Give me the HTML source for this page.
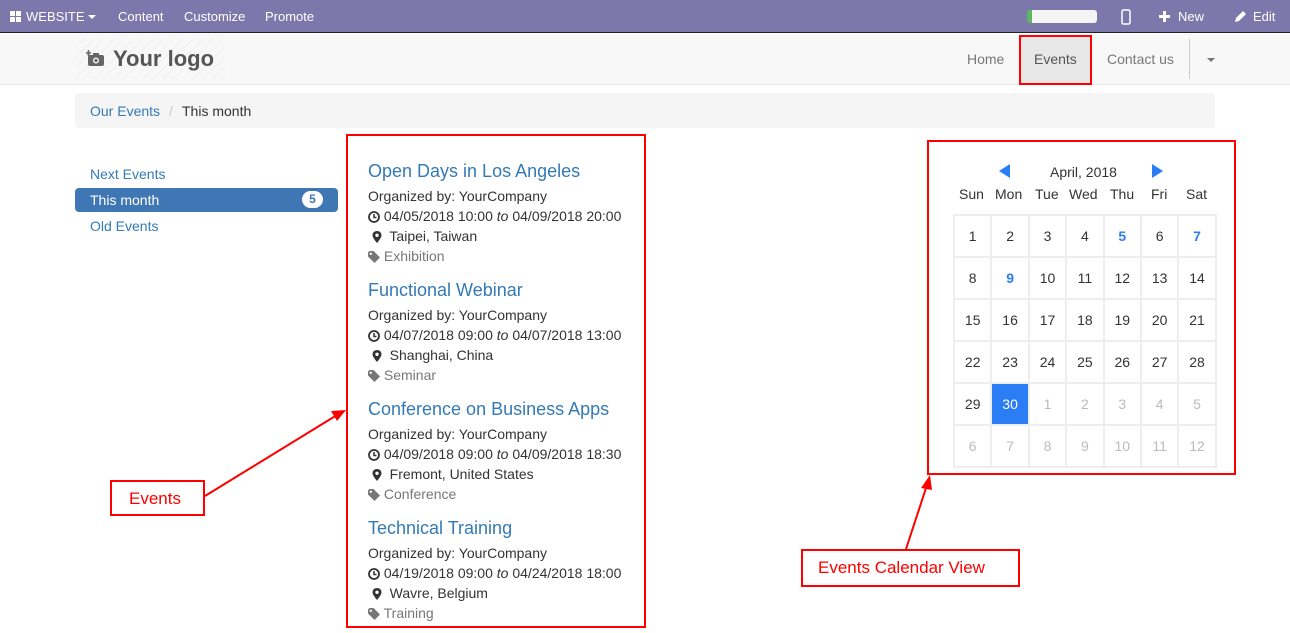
<!DOCTYPE html>
<html><head><meta charset="utf-8"><style>
*{margin:0;padding:0;box-sizing:border-box}
body{width:1290px;height:633px;overflow:hidden;background:#fff;font-family:"Liberation Sans",sans-serif;font-size:14px;color:#333;position:relative}
.a{position:absolute;white-space:nowrap}
.top{position:absolute;left:0;top:0;width:1290px;height:33px;background:#7c78ab;border-bottom:1px solid #222}
.top .a{color:#fff;font-size:13px;top:9px}
.hdr{position:absolute;left:0;top:34px;width:1290px;height:51px;background:#f8f8f8;border-bottom:1px solid #e7e7e7}
.blue{color:#337ab7}
.rb{position:absolute;border:2px solid #f00}
.cal{position:absolute;left:953px;top:214px;border-collapse:collapse;table-layout:fixed;width:262px}
.cal td{width:37.4px;height:42px;border:2px solid #eee;text-align:center;font-size:14px;color:#333;padding:0}
.cal td.m{color:#bbb}
.cal td.b{color:#2a7df4;font-weight:bold}
.cal td.s{background:#2a7df4;color:#fff}
.tag{color:#777}
.e{position:absolute;left:368px;white-space:nowrap}
.e div{height:20px;line-height:20px}
.e .t{font-size:18px;color:#337ab7;height:25px;line-height:22px}
.e svg{vertical-align:-2px}
.caret{display:inline-block;width:0;height:0;border-left:4px solid transparent;border-right:4px solid transparent;border-top:4px solid currentColor;vertical-align:2px}
</style></head><body>
<div class="top">
 <svg class="a" style="left:10px;top:11px" width="12" height="11"><rect x="0" y="0" width="5" height="5" fill="#fff"/><rect x="6" y="0" width="5" height="5" fill="#fff"/><rect x="0" y="6" width="5" height="5" fill="#fff"/><rect x="6" y="6" width="5" height="5" fill="#fff"/></svg>
 <span class="a" style="left:26px">WEBSITE <span class="caret"></span></span>
 <span class="a" style="left:118px">Content</span>
 <span class="a" style="left:184px">Customize</span>
 <span class="a" style="left:265px">Promote</span>
 <div class="a" style="left:1027px;top:10px;width:70px;height:13px;background:#f5f5f5;border-radius:3px;border-left:5px solid #5cb85c"></div>
 <svg class="a" style="left:1121px;top:9px" width="10" height="16"><rect x="1" y="1" width="8" height="14" rx="1.5" fill="none" stroke="#fff" stroke-width="1.5"/><rect x="2.5" y="3" width="5" height="9" fill="#7c78ab"/></svg>
 <svg class="a" style="left:1159px;top:11px" width="11" height="11"><path d="M5.5 0V11M0 5.5H11" stroke="#fff" stroke-width="3"/></svg>
 <span class="a" style="left:1178px">New</span>
 <svg class="a" style="left:1234px;top:10px" width="13" height="13"><path d="M1 12L2 8L9 1L12 4L5 11Z" fill="#fff"/></svg>
 <span class="a" style="left:1253px">Edit</span>
</div>
<div class="hdr">
 <div class="a" style="left:75px;top:5px;width:150px;height:40px;background:repeating-linear-gradient(135deg,#f8f8f8 0 6px,#f0f0f0 6px 7px)"></div>
 <svg class="a" style="left:86px;top:16px" width="18" height="16"><path d="M2.5 0v6M0 3h5" stroke="#666" stroke-width="1.6"/><rect x="2" y="5" width="16" height="11" rx="2" fill="#666"/><rect x="7" y="3" width="6" height="3" fill="#666"/><circle cx="10" cy="10.5" r="3" fill="#f8f8f8"/><circle cx="10" cy="10.5" r="1.6" fill="#666"/></svg>
 <span class="a" style="left:113px;top:12px;font-size:22px;font-weight:bold;color:#555">Your logo</span>
 <span class="a" style="left:967px;top:17px;color:#777">Home</span>
 <div class="a" style="left:1019px;top:1px;width:73px;height:50px;background:#e7e7e7;border:2px solid #f00"></div>
 <span class="a" style="left:1034px;top:17px;color:#555">Events</span>
 <span class="a" style="left:1107px;top:17px;color:#777">Contact us</span>
 <div class="a" style="left:1189px;top:5px;width:1px;height:40px;background:#ccc"></div>
 <span class="a caret" style="left:1207px;top:24px;color:#777"></span>
</div>
<div class="a" style="left:75px;top:93px;width:1140px;height:35px;background:#f5f5f5;border-radius:4px"></div>
<span class="a blue" style="left:90px;top:103px">Our Events</span>
<span class="a" style="left:169px;top:103px;color:#ccc">/</span>
<span class="a" style="left:182px;top:103px">This month</span>

<span class="a blue" style="left:90px;top:166px">Next Events</span>
<div class="a" style="left:75px;top:188px;width:263px;height:24px;background:#3f77b4;border-radius:4px"></div>
<span class="a" style="left:90px;top:192px;color:#fff">This month</span>
<div class="a" style="left:302px;top:191px;width:21px;height:17px;background:#fff;border-radius:9px;color:#3f77b4;font-size:12px;font-weight:bold;text-align:center;line-height:17px">5</div>
<span class="a blue" style="left:90px;top:218px">Old Events</span>

<div class="rb" style="left:346px;top:134px;width:300px;height:494px"></div>

<svg width="0" height="0" style="position:absolute">
 <defs>
  <g id="clk"><circle cx="6" cy="6" r="5" fill="none" stroke="#333" stroke-width="1.8"/><path d="M6 3V6.5H8.5" fill="none" stroke="#333" stroke-width="1.5"/></g>
  <g id="pin"><path d="M5 0C2.2 0 0.5 2 0.5 4.3C0.5 7 5 12 5 12C5 12 9.5 7 9.5 4.3C9.5 2 7.8 0 5 0Z" fill="#333"/><circle cx="5" cy="4.3" r="1.7" fill="#fff"/></g>
  <g id="tag"><path d="M0 1.5V5.5L6.5 12L12 6.5L5.5 0H1.5Z" fill="#777"/><circle cx="2.8" cy="2.8" r="1.2" fill="#fff"/></g>
 </defs>
</svg>

<div class="e" style="top:160px"><div class="t">Open Days in Los Angeles</div></div>
<div class="e" style="top:186px"><div>Organized by: YourCompany</div><div><svg width="12" height="12"><use href="#clk"/></svg> 04/05/2018 10:00 <i>to</i> 04/09/2018 20:00</div><div>&nbsp;<svg width="10" height="12"><use href="#pin"/></svg>&nbsp; Taipei, Taiwan</div><div class="tag"><svg width="12" height="12"><use href="#tag"/></svg> Exhibition</div></div>
<div class="e" style="top:279px"><div class="t">Functional Webinar</div></div>
<div class="e" style="top:305px"><div>Organized by: YourCompany</div><div><svg width="12" height="12"><use href="#clk"/></svg> 04/07/2018 09:00 <i>to</i> 04/07/2018 13:00</div><div>&nbsp;<svg width="10" height="12"><use href="#pin"/></svg>&nbsp; Shanghai, China</div><div class="tag"><svg width="12" height="12"><use href="#tag"/></svg> Seminar</div></div>
<div class="e" style="top:398px"><div class="t">Conference on Business Apps</div></div>
<div class="e" style="top:424px"><div>Organized by: YourCompany</div><div><svg width="12" height="12"><use href="#clk"/></svg> 04/09/2018 09:00 <i>to</i> 04/09/2018 18:30</div><div>&nbsp;<svg width="10" height="12"><use href="#pin"/></svg>&nbsp; Fremont, United States</div><div class="tag"><svg width="12" height="12"><use href="#tag"/></svg> Conference</div></div>
<div class="e" style="top:517px"><div class="t">Technical Training</div></div>
<div class="e" style="top:543px"><div>Organized by: YourCompany</div><div><svg width="12" height="12"><use href="#clk"/></svg> 04/19/2018 09:00 <i>to</i> 04/24/2018 18:00</div><div>&nbsp;<svg width="10" height="12"><use href="#pin"/></svg>&nbsp; Wavre, Belgium</div><div class="tag"><svg width="12" height="12"><use href="#tag"/></svg> Training</div></div>

<div class="rb" style="left:927px;top:140px;width:309px;height:335px"></div>
<svg class="a" style="left:999px;top:164px" width="12" height="14"><path d="M11 0V14L0 7Z" fill="#2a7df4"/></svg>
<span class="a" style="left:1050px;top:164px">April, 2018</span>
<svg class="a" style="left:1152px;top:164px" width="12" height="14"><path d="M0 0V14L11 7Z" fill="#2a7df4"/></svg>
<span class="a" style="left:959px;top:186px">Sun</span>
<span class="a" style="left:995px;top:186px">Mon</span>
<span class="a" style="left:1035px;top:186px">Tue</span>
<span class="a" style="left:1069px;top:186px">Wed</span>
<span class="a" style="left:1110px;top:186px">Thu</span>
<span class="a" style="left:1151px;top:186px">Fri</span>
<span class="a" style="left:1186px;top:186px">Sat</span>
<table class="cal">
<tr><td>1</td><td>2</td><td>3</td><td>4</td><td class="b">5</td><td>6</td><td class="b">7</td></tr>
<tr><td>8</td><td class="b">9</td><td>10</td><td>11</td><td>12</td><td>13</td><td>14</td></tr>
<tr><td>15</td><td>16</td><td>17</td><td>18</td><td>19</td><td>20</td><td>21</td></tr>
<tr><td>22</td><td>23</td><td>24</td><td>25</td><td>26</td><td>27</td><td>28</td></tr>
<tr><td>29</td><td class="s">30</td><td class="m">1</td><td class="m">2</td><td class="m">3</td><td class="m">4</td><td class="m">5</td></tr>
<tr><td class="m">6</td><td class="m">7</td><td class="m">8</td><td class="m">9</td><td class="m">10</td><td class="m">11</td><td class="m">12</td></tr>
</table>

<div class="rb" style="left:110px;top:480px;width:95px;height:36px"></div>
<span class="a" style="left:129px;top:489px;color:#f00;font-size:17px">Events</span>
<div class="rb" style="left:801px;top:549px;width:219px;height:38px"></div>
<span class="a" style="left:818px;top:558px;color:#f00;font-size:17px">Events Calendar View</span>
<svg class="a" style="left:0;top:0" width="1290" height="633">
 <line x1="205" y1="496" x2="337" y2="415" stroke="#f00" stroke-width="2"/>
 <path d="M346 410L331 411L337 421Z" fill="#f00"/>
 <line x1="906" y1="549" x2="927" y2="485" stroke="#f00" stroke-width="2"/>
 <path d="M930 475L921 488L932 490Z" fill="#f00"/>
</svg>
</body></html>
